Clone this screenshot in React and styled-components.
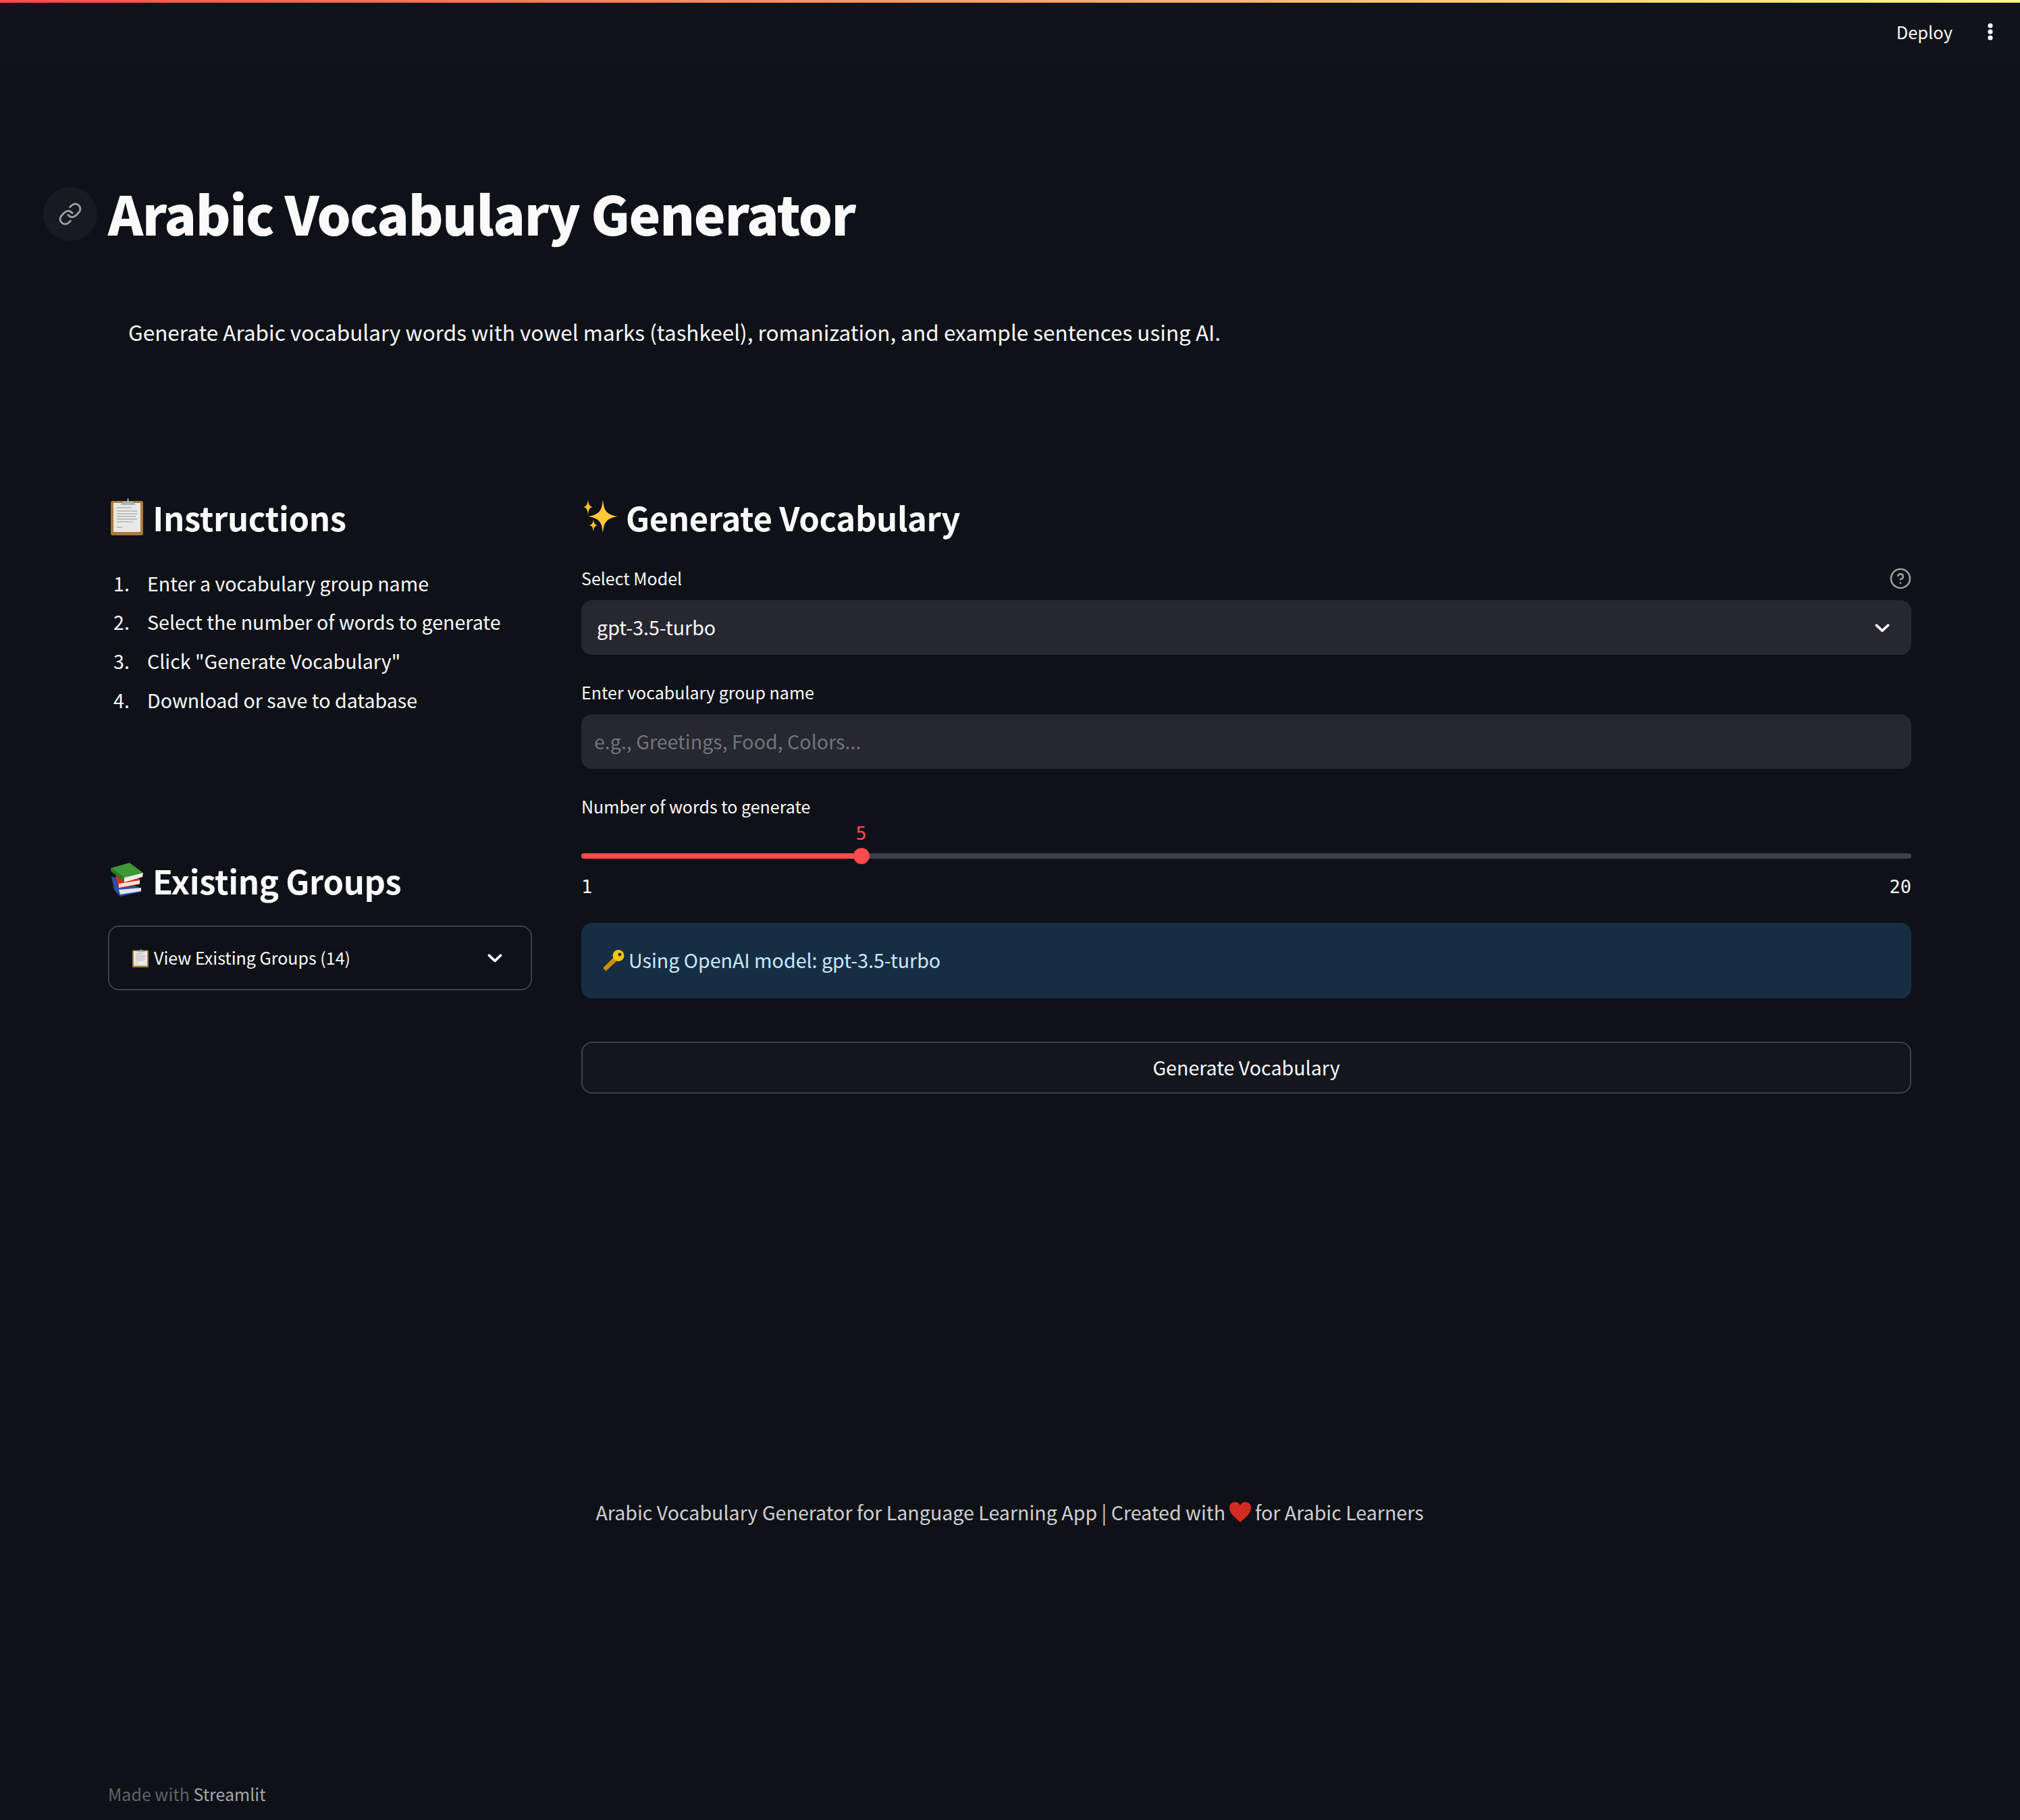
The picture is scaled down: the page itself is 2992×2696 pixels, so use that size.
import React from "react";
import styled, { createGlobalStyle } from "styled-components";

const Global = createGlobalStyle`
  html, body { margin: 0; padding: 0; background: #0e1117; }
  body {
    color: #fafafa;
    font-family: "Noto Sans CJK JP", "Noto Sans", sans-serif;
    -webkit-font-smoothing: antialiased;
  }
`;

const Page = styled.div`
  min-height: 2696px;
  display: flex;
  flex-direction: column;
  background: #0e1117;
`;

const TopBar = styled.header`
  height: 96px;
  box-sizing: border-box;
  flex: none;
  background: #10131a;
  display: flex;
  align-items: center;
  justify-content: flex-end;
  padding-right: 37px;
  gap: 49px;
  border-top: 4px solid;
  border-image: linear-gradient(90deg, #ff4b4b, #fffd80) 1;
`;

const Deploy = styled.span`
  font-size: 25.5px;
  line-height: 40px;
  margin-top: -6px;
`;

const Kebab = styled.svg`
  width: 14px;
  height: 32px;
  margin-top: -6px;
`;

const Main = styled.main`
  padding: 0 161px 0 160px;
  display: flex;
  flex-direction: column;
`;

const Title = styled.h1`
  position: relative;
  margin: 168px 0 0;
  padding-bottom: 10px;
  font-size: 79px;
  line-height: 102px;
  letter-spacing: -1.45px;
  font-weight: 900;
`;

const LinkBadge = styled.span`
  position: absolute;
  left: -96px;
  top: 13px;
  width: 80px;
  height: 80px;
  border-radius: 50%;
  background: #171a21;
  color: #9a9b9e;
  display: flex;
  align-items: center;
  justify-content: center;
`;

const Lead = styled.p`
  margin: 90px 0 0 30px;
  font-size: 31.5px;
  line-height: 51px;
`;

const Columns = styled.div`
  display: grid;
  grid-template-columns: 628px 1fr;
  column-gap: 73px;
  margin-top: 210px;
`;

const Col = styled.section`
  display: flex;
  flex-direction: column;
`;

const Heading = styled.h2`
  display: flex;
  align-items: center;
  box-sizing: border-box;
  gap: ${(p) => p.$gap}px;
  margin: ${(p) => p.$top || 0}px 0 0;
  padding: 0 0 4px ${(p) => p.$left}px;
  height: 80px;
  font-size: 49px;
  letter-spacing: -0.38px;
  font-weight: 600;
`;

const Steps = styled.ol`
  list-style: none;
  margin: 29px 0 0;
  padding: 0;
`;

const Step = styled.li`
  display: flex;
  box-sizing: border-box;
  height: 57.6px;
  padding-bottom: 3px;
  align-items: center;
  font-size: 28.6px;
`;

const StepNum = styled.span`
  width: 50px;
  margin-left: 8px;
  flex: none;
`;

const Expander = styled.div`
  margin-top: 26px;
  height: 96px;
  box-sizing: border-box;
  border: 2px solid #3d4049;
  border-radius: 16px;
  display: flex;
  align-items: center;
  padding: 0 40px 0 34px;
  font-size: 25px;
  gap: 8px;
`;

const ExpanderText = styled.span`
  flex: 1;
  padding-bottom: 3px;
`;

const LabelRow = styled.div`
  display: flex;
  align-items: center;
  justify-content: space-between;
  height: 40px;
  margin-top: ${(p) => p.$top}px;
  font-size: 25px;
`;

const LabelText = styled.span`
  padding-bottom: 3px;
`;

const HelpIcon = styled.svg`
  width: 32px;
  height: 32px;
  color: #9a9b9e;
`;

const Field = styled.div`
  margin-top: 12px;
  height: 81px;
  box-sizing: border-box;
  border-radius: 16px;
  background: #262730;
  display: flex;
  align-items: center;
  justify-content: space-between;
  padding: 0 30px 0 ${(p) => p.$pad}px;
  font-size: 28.6px;
  color: ${(p) => p.$muted ? "#72737a" : "#fafafa"};
`;

const FieldText = styled.span`
  padding-bottom: 3px;
`;

const Chevron = styled.svg`
  width: 26px;
  height: 26px;
`;

const Slider = styled.div`
  position: relative;
  margin-top: 41px;
  height: 24px;
  display: flex;
  align-items: center;
`;

const Track = styled.div`
  width: 100%;
  height: 8px;
  border-radius: 4px;
  background: linear-gradient(90deg, #ff4b4b 0 21.05%, #3d4049 21.05% 100%);
`;

const Thumb = styled.div`
  position: absolute;
  top: 0;
  width: 24px;
  height: 24px;
  margin-left: -12px;
  border-radius: 50%;
  background: #ff4b4b;
`;

const ThumbValue = styled.span`
  position: absolute;
  top: -41px;
  left: 50%;
  transform: translateX(-50%);
  font-family: "DejaVu Sans Mono", "Liberation Mono", monospace;
  font-size: 27px;
  line-height: 40px;
  color: #ff4b4b;
`;

const Ticks = styled.div`
  display: flex;
  justify-content: space-between;
  margin-top: 14px;
  font-family: "DejaVu Sans Mono", "Liberation Mono", monospace;
  font-size: 27px;
  line-height: 40px;
`;

const Alert = styled.div`
  margin-top: 33px;
  height: 112px;
  border-radius: 16px;
  background: #172d43;
  color: #c7ebff;
  display: flex;
  align-items: center;
  gap: 6px;
  padding-left: 32px;
  font-size: 28.6px;
`;

const AlertText = styled.span`
  padding-bottom: 3px;
`;

const Button = styled.button`
  margin-top: 64px;
  height: 77px;
  padding: 0 0 3px;
  border: 2px solid #3d4049;
  border-radius: 16px;
  background: #13161d;
  color: #fafafa;
  font: inherit;
  font-size: 28.6px;
`;

const Credit = styled.p`
  margin: 594px 0 0;
  text-align: center;
  font-size: 28.6px;
  line-height: 51px;
  color: #cfcfd1;
  display: flex;
  align-items: center;
  justify-content: center;
  gap: 6px;
`;

const MadeWith = styled.footer`
  margin-top: auto;
  padding: 0 0 19px 160px;
  font-size: 25px;
  line-height: 40px;
  color: #5f6268;
`;

const Brand = styled.span`
  color: #a3a5a9;
`;

const Clipboard = ({ size = 56 }) => (
  <svg width={size * 0.86} height={size} viewBox="0 0 48 56">
    <rect x="0" y="5" width="48" height="51" rx="3" fill="#a77b3e" />
    <rect x="4" y="8" width="40" height="43" fill="#e9e9e6" />
    <path d="M9 15h22M9 20h30M9 24h30M9 28h28M9 32h30M9 36h24M9 44h8" stroke="#b3b3b0" strokeWidth="1.6" />
    <path d="M14 11l4-5h6l1-5h-1 2l1 5h6l4 5z" fill="#a9b4c0" />
  </svg>
);

const Sparkles = () => (
  <svg width="52" height="50" viewBox="0 0 52 50">
    <path d="M29 0c1.600 14 2.800 22 22 25-19.200 3-20.400 11-22 25-1.600-14-2.800-22-22-25 19.200-3 20.400-11 22-25z" fill="#fdc83a" />
    <path d="M7 0c.6 6 1.700 10 7 11-5.300 1-6.400 5-7 12-.6-7-1.700-11-7-12 5.300-1 6.400-5 7-11z" fill="#fbbf2e" />
    <path d="M15 29c.5 5 1.500 8 6 9-4.500 1-5.500 4-6 10-.5-6-1.500-9-6-10 4.500-1 5.500-4 6-9z" fill="#fbbf2e" />
  </svg>
);

const Books = () => (
  <svg width="48" height="50" viewBox="0 0 48 50">
    <path d="M1 20l44 18v5l-31 7-9-10z" fill="#2a4ea6" />
    <path d="M12 40l33-3v5l-31 5z" fill="#e4e6ea" />
    <path d="M7 20l36 3v9l-31 6z" fill="#dd2a1b" />
    <path d="M12 31l31-5v5l-31 6z" fill="#f2e6d8" />
    <path d="M0 8L28 0l20 15-28 7z" fill="#3c9a34" />
    <path d="M0 8v4l19 17 1-7z" fill="#2b7a27" />
    <path d="M20 22l28-7-1 6-27 8z" fill="#edf0e8" />
  </svg>
);

const KeyEmoji = () => (
  <svg width="32" height="32" viewBox="0 0 32 32">
    <path d="M17 10l5 5L6 30l-2 2-1-3-2 0 0-3z" fill="#c98f0c" />
    <circle cx="23" cy="8.500" r="8.500" fill="#f5c211" />
    <circle cx="25" cy="7" r="2.400" fill="#17283c" />
  </svg>
);

const Heart = () => (
  <svg width="32" height="30" viewBox="0 0 32 30">
    <path d="M16 30C6 21 0 16 0 8.500 0 3 4 0 8.500 0 12 0 15 2 16 5c1-3 4-5 7.500-5C28 0 32 3 32 8.500 32 16 26 21 16 30z" fill="#d42b20" />
  </svg>
);

const LinkIcon = () => (
  <svg width="36" height="36" viewBox="0 0 24 24" fill="none" stroke="currentColor" strokeWidth="2" strokeLinecap="round" strokeLinejoin="round">
    <path d="M10 13a5 5 0 0 0 7.540.54l3-3a5 5 0 0 0-7.070-7.070l-1.720 1.710" />
    <path d="M14 11a5 5 0 0 0-7.540-.54l-3 3a5 5 0 0 0 7.070 7.070l1.710-1.710" />
  </svg>
);

const Down = () => (
  <Chevron viewBox="0 0 24 24" fill="none" stroke="#fafafa" strokeWidth="3.400" strokeLinecap="round" strokeLinejoin="round">
    <path d="M4 8.500l8 7.500 8-7.500" />
  </Chevron>
);

const steps = [
  "Enter a vocabulary group name",
  "Select the number of words to generate",
  'Click "Generate Vocabulary"',
  "Download or save to database",
];

export default function App() {
  return (
    <Page>
      <Global />
      <TopBar>
        <Deploy>Deploy</Deploy>
        <Kebab viewBox="0 0 14 32" fill="#fafafa">
          <circle cx="7" cy="7" r="3.600" />
          <circle cx="7" cy="16" r="3.600" />
          <circle cx="7" cy="25" r="3.600" />
        </Kebab>
      </TopBar>
      <Main>
        <Title>
          <LinkBadge><LinkIcon /></LinkBadge>
          Arabic Vocabulary Generator
        </Title>
        <Lead>Generate Arabic vocabulary words with vowel marks (tashkeel), romanization, and example sentences using AI.</Lead>
        <Columns>
          <Col>
            <Heading $left={4} $gap={14}><Clipboard />Instructions</Heading>
            <Steps>
              {steps.map((s, i) => (
                <Step key={s}><StepNum>{i + 1}.</StepNum>{s}</Step>
              ))}
            </Steps>
            <Heading $top={199} $left={4} $gap={14}><Books />Existing Groups</Heading>
            <Expander>
              <Clipboard size={28} />
              <ExpanderText>View Existing Groups (14)</ExpanderText>
              <Down />
            </Expander>
          </Col>
          <Col>
            <Heading $left={3} $gap={11}><Sparkles />Generate Vocabulary</Heading>
            <LabelRow $top={30}>
              <LabelText>Select Model</LabelText>
              <HelpIcon viewBox="0 0 24 24" fill="none" stroke="currentColor" strokeWidth="2" strokeLinecap="round">
                <circle cx="12" cy="12" r="10.500" />
                <path d="M9.090 9a3 3 0 0 1 5.830 1c0 2-3 3-3 3" />
                <path d="M12 17h.01" />
              </HelpIcon>
            </LabelRow>
            <Field $pad={23}><FieldText>gpt-3.5-turbo</FieldText><Down /></Field>
            <LabelRow $top={36}><LabelText>Enter vocabulary group name</LabelText></LabelRow>
            <Field $pad={19} $muted><FieldText>e.g., Greetings, Food, Colors...</FieldText></Field>
            <LabelRow $top={36}><LabelText>Number of words to generate</LabelText></LabelRow>
            <Slider>
              <Track />
              <Thumb style={{ left: `${(4 / 19) * 100}%` }}>
                <ThumbValue>5</ThumbValue>
              </Thumb>
            </Slider>
            <Ticks><span>1</span><span>20</span></Ticks>
            <Alert><KeyEmoji /><AlertText>Using OpenAI model: gpt-3.5-turbo</AlertText></Alert>
            <Button>Generate Vocabulary</Button>
          </Col>
        </Columns>
        <Credit>Arabic Vocabulary Generator for Language Learning App | Created with <Heart /> for Arabic Learners</Credit>
      </Main>
      <MadeWith>Made with <Brand>Streamlit</Brand></MadeWith>
    </Page>
  );
}
